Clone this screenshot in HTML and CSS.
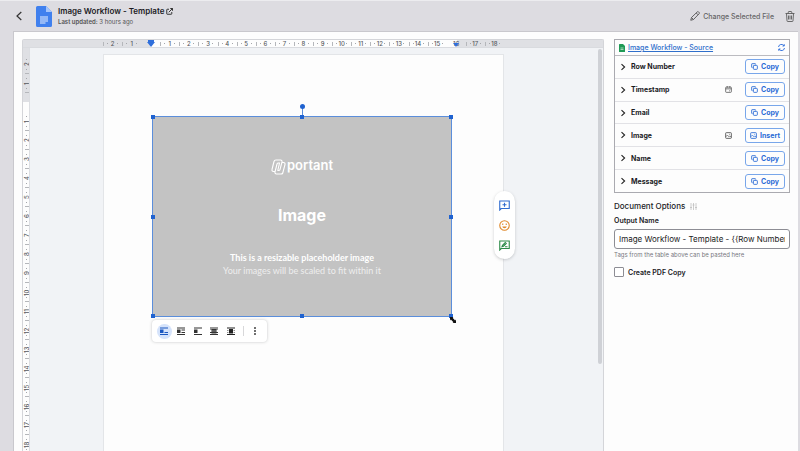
FILE: index.html
```html
<!DOCTYPE html>
<html lang="en">
<head>
    <meta charset="UTF-8">
    <meta name="viewport" content="width=device-width, initial-scale=1.0">
    <title>Image Workflow - Template</title>
    <link rel="stylesheet" href="styles.css">
</head>
<body>
    <!-- shared icons -->
    <svg class="defs" width="0" height="0" aria-hidden="true">
        <symbol id="icon-chevron" viewBox="0 0 8 8">
            <path d="M2.5 1.2 5.6 4 2.5 6.8" fill="none" stroke="#222" stroke-width="1.1"/>
        </symbol>
        <symbol id="icon-copy" viewBox="0 0 16 16">
            <rect x="5.5" y="5.5" width="9" height="9" rx="1.5" fill="none" stroke="currentColor" stroke-width="2"/>
            <path d="M3.5 10.5h-1a1 1 0 0 1-1-1v-7a1 1 0 0 1 1-1h7a1 1 0 0 1 1 1v1" fill="none" stroke="currentColor" stroke-width="2"/>
        </symbol>
        <symbol id="icon-image" viewBox="0 0 16 16">
            <rect x="1.5" y="1.5" width="13" height="13" rx="1.5" fill="none" stroke="currentColor" stroke-width="2"/>
            <path d="M1.5 11 5.5 7l3.5 4 2-2 3.5 3" fill="none" stroke="currentColor" stroke-width="1.6"/>
            <circle cx="10.5" cy="5.3" r="1.1" fill="currentColor"/>
        </symbol>
    </svg>

    <div class="app">
        <header class="topbar">
            <button class="icon-btn back" aria-label="Back">
                <svg width="8" height="10" viewBox="0 0 8 10"><path d="M6.3 1 2 5l4.3 4" fill="none" stroke="#333" stroke-width="1.2"/></svg>
            </button>
            <svg class="doc-icon" width="16" height="21" viewBox="0 0 16 21">
                <path d="M1.5 0H10l6 6v13.500A1.500 1.500 0 0 1 14.500 21h-13A1.500 1.500 0 0 1 0 19.500v-18A1.500 1.500 0 0 1 1.500 0z" fill="#4080ee"/>
                <path d="M10 0l6 6h-6z" fill="#a5c5fb"/>
                <path d="M4 11h8M4 13h8M4 15h8M4 17h5.5" stroke="#e8f0fe" stroke-width="1.1"/>
            </svg>
            <div class="heading">
                <h1>Image Workflow - Template
                    <a href="#" aria-label="Open template"><svg width="7" height="7" viewBox="0 0 14 14" fill="none" stroke="#222" stroke-width="1.8"><path d="M6 2.5H2.5a1 1 0 0 0-1 1v8a1 1 0 0 0 1 1h8a1 1 0 0 0 1-1V8M8.5 1H13v4.500M13 1 5.500 8.500"/></svg></a>
                </h1>
                <p><b>Last updated:</b> 3 hours ago</p>
            </div>
            <button class="icon-btn change">
                <svg width="10" height="10" viewBox="0 0 20 20" fill="none" stroke="#555" stroke-width="1.8"><path d="M1.5 18.5 3 13 14.5 1.8a1.8 1.8 0 0 1 2.6 0l1.1 1.1a1.8 1.8 0 0 1 0 2.6L7 17zM12.500 4l3.600 3.600M3 13l4 4"/></svg>
                Change Selected File
            </button>
            <button class="icon-btn trash" aria-label="Delete">
                <svg width="10" height="11" viewBox="0 0 20 22" fill="none" stroke="#555" stroke-width="1.7"><path d="M1 5h18M3 5l1 14.500a1.500 1.500 0 0 0 1.500 1.500h9a1.500 1.500 0 0 0 1.500-1.500L17 5M6.500 5V2.500A1.500 1.500 0 0 1 8 1h4a1.500 1.500 0 0 1 1.500 1.500V5M7 9v8M10 9v8M13 9v8"/></svg>
            </button>
        </header>

        <main class="workspace">
            <section class="editor">
                <div class="ruler-h">
                    <div class="ticks">
                        <span>2</span><span>1</span><span class="start"><svg class="marker" width="8" height="7" viewBox="0 0 8 7"><path d="M1 0h6v2h1L4 7 0 2h1z" fill="#2f6fdb"/></svg></span><span class="on">1</span><span class="on">2</span><span class="on">3</span><span class="on">4</span><span class="on">5</span><span class="on">6</span><span class="on">7</span><span class="on">8</span><span class="on">9</span><span class="on">10</span><span class="on">11</span><span class="on">12</span><span class="on">13</span><span class="on">14</span><span class="on">15</span><span class="end">16<svg class="marker" width="6" height="5" viewBox="0 0 6 5"><path d="M0 1h6L3 5z" fill="#2f6fdb"/></svg></span><span>17</span><span>18</span>
                    </div>
                </div>
                <div class="canvas">
                    <div class="ruler-v">
                        <span>2</span><span>1</span><span class="start"></span><span class="on">1</span><span class="on">2</span><span class="on">3</span><span class="on">4</span><span class="on">5</span><span class="on">6</span><span class="on">7</span><span class="on">8</span><span class="on">9</span><span class="on">10</span><span class="on">11</span><span class="on">12</span><span class="on">13</span><span class="on">14</span><span class="on">15</span><span class="on">16</span><span class="on">17</span><span class="on">18</span>
                    </div>
                    <div class="page-area">
                        <div class="page">
                            <div class="placeholder">
                                <div class="brand">
                                    <!-- two interlocked slanted links -->
                                    <svg width="15" height="16" viewBox="0 0 30 32" fill="none" stroke="#fff" stroke-width="2.2">
                                        <path d="M8 25H5a3 3 0 0 1-3-4L6 5a4 4 0 0 1 4-3h9a3 3 0 0 1 3 4l-4 15a3 3 0 0 1-3 2h-2"/>
                                        <path d="M22 7h3a3 3 0 0 1 3 4l-4 15a4 4 0 0 1-4 4h-9a3 3 0 0 1-3-4l4-16a3 3 0 0 1 3-2h2l-3.500 15"/>
                                    </svg>
                                    portant
                                </div>
                                <h2>Image</h2>
                                <p class="strong">This is a resizable placeholder image</p>
                                <p>Your images will be scaled to fit within it</p>
                                <i class="stem"></i>
                                <i class="handle rotate"></i>
                                <i class="handle tl"></i><i class="handle tc"></i><i class="handle tr"></i>
                                <i class="handle ml"></i><i class="handle mr"></i>
                                <i class="handle bl"></i><i class="handle bc"></i><i class="handle br"></i>
                                <svg class="cursor" width="6" height="6" viewBox="0 0 7 7"><path d="M0 0h4L3 1l3 3 1-1v4H3l1-1-3-3-1 1z" fill="#111"/></svg>
                            </div>
                            <div class="wrap-bar">
                                <button class="active" aria-label="In line">
                                    <svg width="8" height="8" viewBox="0 0 16 16" fill="#1a57c0"><path d="M0 1h16v2H0zM0 5h7v7H0zM9 10h7v2H9zM0 14h16v2H0z"/></svg>
                                </button>
                                <button aria-label="Wrap text">
                                    <svg width="8" height="8" viewBox="0 0 16 16" fill="#333"><path d="M0 1h16v2H0zM0 5h7v7H0zM9 5h7v2H9zM9 10h7v2H9zM0 14h16v2H0z"/></svg>
                                </button>
                                <button aria-label="Break text">
                                    <svg width="8" height="8" viewBox="0 0 16 16" fill="#333"><path d="M0 1h16v2H0zM0 5h7v7H0zM0 14h16v2H0z"/></svg>
                                </button>
                                <button aria-label="Behind text">
                                    <svg width="8" height="8" viewBox="0 0 16 16" fill="#333"><path d="M0 1h16v2H0zM3 4h10v9H3zM0 5h16v1H0zM0 10h16v2H0zM0 14h16v2H0z"/><path d="M4 7h8v2H4z" fill="#888"/></svg>
                                </button>
                                <button aria-label="In front of text">
                                    <svg width="8" height="8" viewBox="0 0 16 16" fill="#222"><path d="M0 1h16v2H0zM4 4h8v9H4zM0 6h3v1H0zM13 6h3v1h-3zM0 10h3v1H0zM13 10h3v1h-3zM0 14h16v2H0z"/></svg>
                                </button>
                                <span class="divider"></span>
                                <button aria-label="More options">
                                    <svg width="8" height="8" viewBox="0 0 16 16" fill="#333"><circle cx="8" cy="2" r="1.9"/><circle cx="8" cy="8" r="1.9"/><circle cx="8" cy="14" r="1.9"/></svg>
                                </button>
                            </div>
                            <div class="side-pill">
                                <button aria-label="Add comment">
                                    <svg width="11" height="11" viewBox="0 0 22 22" fill="none" stroke="#2f6bd0" stroke-width="2.2"><path d="M1.5 20V2h19v15H4.5zM11 5.500v8M7 9.500h8"/></svg>
                                </button>
                                <button aria-label="Add emoji reaction">
                                    <svg width="11" height="11" viewBox="0 0 22 22" fill="none" stroke="#e0892b" stroke-width="2.2"><circle cx="11" cy="11" r="9.5"/><path d="M6.5 13h9a4.6 4.600 0 0 1-9 0z" fill="#e0892b" stroke="none"/><path d="M7.500 7v3M14.500 7v3"/></svg>
                                </button>
                                <button aria-label="Suggest edits">
                                    <svg width="11" height="11" viewBox="0 0 22 22" fill="none" stroke="#2c8b48" stroke-width="2.2"><path d="M1.500 20V2h19v15H4.500zM6 13.500l1-3 5.500-5.500 2 2L9 12.500zM12 13.500h5"/></svg>
                                </button>
                            </div>
                        </div>
                    </div>
                    <i class="scrollbar"></i>
                </div>
            </section>

            <aside class="panel">
                <div class="source">
                    <div class="source-head">
                        <svg width="6" height="8" viewBox="0 0 12 16"><path d="M1 0h7l4 4v11a1 1 0 0 1-1 1H1a1 1 0 0 1-1-1V1a1 1 0 0 1 1-1z" fill="#1f9a55"/><path d="M3 8h6M3 11h6" fill="none" stroke="#fff" stroke-width="1.2"/></svg>
                        <a href="#">Image Workflow - Source</a>
                        <button class="icon-btn" aria-label="Refresh">
                            <svg width="7" height="7" viewBox="0 0 14 14" fill="none" stroke="#2f6fdb" stroke-width="1.9"><path d="M1 6a6 6 0 0 1 11-2.5M13 8a6 6 0 0 1-11 2.5M12.5.5v3.500H9M1.500 13.500V10H5"/></svg>
                        </button>
                    </div>
                    <ul class="fields">
                        <li><svg class="chevron"><use href="#icon-chevron"/></svg><span>Row Number</span><button><svg><use href="#icon-copy"/></svg>Copy</button></li>
                        <li><svg class="chevron"><use href="#icon-chevron"/></svg><span>Timestamp</span><svg class="type" viewBox="0 0 16 16" fill="none" stroke="#555" stroke-width="1.8"><rect x="1.5" y="2.5" width="13" height="12" rx="1.5"/><path d="M1.500 6.500h13M5 0v4M11 0v4M9.500 11h2"/></svg><button><svg><use href="#icon-copy"/></svg>Copy</button></li>
                        <li><svg class="chevron"><use href="#icon-chevron"/></svg><span>Email</span><button><svg><use href="#icon-copy"/></svg>Copy</button></li>
                        <li><svg class="chevron"><use href="#icon-chevron"/></svg><span>Image</span><svg class="type"><use href="#icon-image"/></svg><button><svg><use href="#icon-image"/></svg>Insert</button></li>
                        <li><svg class="chevron"><use href="#icon-chevron"/></svg><span>Name</span><button><svg><use href="#icon-copy"/></svg>Copy</button></li>
                        <li><svg class="chevron"><use href="#icon-chevron"/></svg><span>Message</span><button><svg><use href="#icon-copy"/></svg>Copy</button></li>
                    </ul>
                </div>

                <h3>Document Options
                    <svg width="7" height="7" viewBox="0 0 14 14" stroke="#bbb" stroke-width="1.5"><path d="M2 0v14M7 0v14M12 0v14M0 9h4M5 4h4M10 9h4"/></svg>
                </h3>
                <label class="field-label" for="outputName">Output Name</label>
                <input type="text" id="outputName" value="Image Workflow - Template - {{Row Number}}">
                <p class="hint">Tags from the table above can be pasted here</p>
                <div class="check">
                    <input type="checkbox" id="pdfCopy">
                    <label for="pdfCopy">Create PDF Copy</label>
                </div>
            </aside>
        </main>
    </div>
</body>
</html>
```
FILE: styles.css
```css
* {
    box-sizing: border-box;
}
body {
    margin: 0;
    font-family: Inter, "Liberation Sans", sans-serif;
    font-size: 8px;
    color: #1b1b1f;
    background-color: #dddce1;
}
h1, h2, h3, p, ul {
    margin: 0;
    padding: 0;
}
button {
    font-family: inherit;
    padding: 0;
    border: none;
    background: none;
    cursor: pointer;
}
svg {
    flex: none;
}
.defs {
    position: absolute;
}
.app {
    display: flex;
    flex-direction: column;
    height: 100vh;
    overflow: hidden;
    border-top: 1px solid #ececef;
}

/* top bar */
.topbar {
    display: flex;
    align-items: center;
    height: 30px;
    flex: none;
    padding: 0 5px 0 15px;
}
.icon-btn {
    display: flex;
    align-items: center;
    color: #666;
    font-size: 7px;
}
.doc-icon {
    margin: 0 6px 0 13px;
}
.heading {
    flex: 1;
}
.heading h1 {
    display: flex;
    align-items: center;
    gap: 2px;
    font-size: 8px;
    line-height: 11px;
    font-weight: 600;
}
.heading a {
    display: flex;
}
.heading p {
    font-size: 6px;
    line-height: 9px;
    color: #555;
}
.heading b {
    font-weight: 600;
}
.change {
    gap: 3px;
    margin-right: 11px;
    font-weight: 500;
}

/* workspace */
.workspace {
    display: flex;
    flex: 1;
    min-height: 0;
    margin: 0 2px 0 13px;
    background-color: #fdfdfd;
    border: 1px solid #c9c8cd;
    border-width: 1px 0 0 1px;
}
.editor {
    display: flex;
    flex-direction: column;
    flex: 1;
    min-width: 0;
    margin: 7px 0 0 8px;
    border: 1px solid #d4d5d9;
    border-bottom: none;
    border-radius: 2px 2px 0 0;
    background-color: #f1f3f6;
}
.ruler-h {
    display: flex;
    justify-content: center;
    flex: none;
    height: 8px;
    padding: 0 26px 0 7px;
    background-color: #dfe0e4;
    border-bottom: 1px solid #d9dbdf;
}
.ticks {
    display: flex;
    width: 401px;
}
.ticks span,
.ruler-v span {
    position: relative;
    display: flex;
    align-items: center;
    justify-content: center;
    font-size: 6px;
    line-height: 7px;
    font-weight: 500;
    color: #55585c;
}
.ticks span {
    flex: 1;
    background-image: linear-gradient(#b5b7bb, #b5b7bb), linear-gradient(#a5a7ab, #a5a7ab), linear-gradient(#a5a7ab, #a5a7ab);
    background-size: 1px 4px, 1px 1px, 1px 1px;
    background-position: 0 2px, 4px 3px, 14px 3px;
    background-repeat: no-repeat;
}
.on {
    background-color: #fdfdfd;
}
.ticks .start {
    background-image: linear-gradient(90deg, #dfe0e4 50%, #fdfdfd 50%);
    background-size: auto;
    background-position: 0 0;
}
.ticks .end {
    background-image: linear-gradient(90deg, #fdfdfd 50%, #dfe0e4 50%);
    background-size: auto;
    background-position: 0 0;
}
.end .marker {
    position: absolute;
    top: 2px;
    left: 6px;
}
.canvas {
    position: relative;
    display: flex;
    flex: 1;
    min-height: 0;
}
.ruler-v {
    flex: none;
    width: 7px;
    padding-top: 7px;
    background-color: #dfe0e4;
    border-right: 1px solid #dcdee2;
    overflow: hidden;
}
.ruler-v span {
    height: 19px;
    writing-mode: vertical-rl;
    transform: rotate(180deg);
    background-image: linear-gradient(#b5b7bb, #b5b7bb), linear-gradient(#a5a7ab, #a5a7ab), linear-gradient(#a5a7ab, #a5a7ab);
    background-size: 4px 1px, 1px 1px, 1px 1px;
    background-position: 1px 0, 3px 4px, 3px 14px;
    background-repeat: no-repeat;
}
.ruler-v .start {
    width: 6px;
    background-image: linear-gradient(#fdfdfd 50%, #dfe0e4 50%);
    background-size: auto;
    background-position: 0 0;
}
.page-area {
    display: flex;
    justify-content: center;
    flex: 1;
    padding: 6px 26px 0 0;
}
.page {
    position: relative;
    width: 401px;
    padding: 61px 51px 0 48px;
    background-color: #fdfdfd;
    border: 1px solid #e3e5e8;
    border-bottom: none;
}
.scrollbar {
    position: absolute;
    top: 1px;
    right: 1px;
    width: 4px;
    height: 315px;
    border-radius: 2px;
    background-color: #cfd1d6;
}

/* selected image */
.placeholder {
    position: relative;
    display: flex;
    flex-direction: column;
    align-items: center;
    height: 201px;
    padding-top: 38px;
    background-color: #c3c3c3;
    border: 1px solid #5b8edb;
    color: #fff;
}
.brand {
    display: flex;
    align-items: center;
    gap: 1px;
    height: 20px;
    font-size: 13px;
    line-height: 16px;
    font-weight: 600;
}
.brand svg {
    margin-top: 4px;
}
.placeholder h2 {
    margin: 30px 0 26px;
    font-size: 16px;
    line-height: 20px;
    font-weight: 700;
}
.placeholder p {
    font-family: Lato, "Liberation Sans", sans-serif;
    font-size: 9px;
    line-height: 13px;
    color: #eee;
}
.placeholder .strong {
    font-weight: 700;
    color: #fff;
}
.handle {
    position: absolute;
    width: 4px;
    height: 4px;
    margin: -2px;
    background-color: #1f62d0;
}
.tl, .ml, .bl {
    left: 0;
}
.tc, .bc, .rotate, .stem {
    left: 50%;
}
.tr, .mr, .br {
    left: 100%;
}
.tl, .tc, .tr {
    top: 0;
}
.ml, .mr {
    top: 50%;
}
.bl, .bc, .br {
    top: 100%;
}
.rotate {
    top: -11px;
    width: 5px;
    height: 5px;
    border-radius: 50%;
}
.stem {
    position: absolute;
    top: -10px;
    width: 1px;
    height: 10px;
    background-color: #5b8edb;
}
.cursor {
    position: absolute;
    right: -5px;
    bottom: -7px;
}
.wrap-bar {
    display: flex;
    align-items: center;
    width: 115px;
    height: 22px;
    margin-top: 3px;
    padding: 0 5px;
    gap: 2px;
    border-radius: 4px;
    background-color: #fff;
    box-shadow: 0 0 3px rgba(60, 64, 67, 0.3);
}
.wrap-bar button {
    display: flex;
    align-items: center;
    justify-content: center;
    width: 15px;
    height: 15px;
    border-radius: 50%;
}
.wrap-bar .active {
    background-color: #d5e3fb;
}
.divider {
    width: 1px;
    height: 10px;
    margin: 0 1px 0 3px;
    background-color: #d8d8da;
}
.side-pill {
    position: absolute;
    top: 136px;
    right: -12px;
    display: flex;
    flex-direction: column;
    align-items: center;
    justify-content: center;
    gap: 9px;
    width: 21px;
    height: 68px;
    border-radius: 11px;
    background-color: #fff;
    box-shadow: 0 1px 3px rgba(60, 64, 67, 0.25);
}
.side-pill button {
    display: flex;
}

/* right panel */
.panel {
    flex: none;
    width: 194px;
    padding: 7px 8px 0 10px;
}
.source {
    border: 1px solid #aaaab0;
}
.source-head {
    display: flex;
    align-items: center;
    gap: 3px;
    height: 16px;
    padding: 0 4px;
    border-bottom: 1px solid #bbbbc0;
}
.source-head a {
    flex: 1;
    font-size: 7px;
    font-weight: 500;
    color: #2f6fcb;
    text-decoration: underline;
}
.fields {
    display: flex;
    flex-direction: column;
    height: 136px;
    list-style: none;
}
.fields li {
    display: flex;
    flex: 1;
    align-items: center;
    padding: 0 4px;
    border-top: 1px solid #e2e2e6;
}
.fields li:first-child {
    border-top: none;
}
.fields span {
    flex: 1;
    margin-left: 4px;
    font-size: 7px;
    font-weight: 700;
}
.chevron {
    width: 8px;
    height: 8px;
}
.type {
    width: 7px;
    height: 7px;
    margin-right: 13px;
    color: #555;
}
.fields button {
    display: flex;
    align-items: center;
    justify-content: center;
    gap: 3px;
    width: 40px;
    height: 15px;
    border: 1px solid #78a6ea;
    border-radius: 3px;
    font-size: 7px;
    font-weight: 700;
    color: #2a6bd6;
}
.fields button svg {
    width: 7px;
    height: 7px;
}
.panel h3 {
    display: flex;
    align-items: center;
    gap: 5px;
    margin: 8px 0 5px;
    font-size: 8px;
    line-height: 10px;
    font-weight: 500;
}
.field-label {
    display: block;
    margin-bottom: 3px;
    font-size: 7px;
    line-height: 10px;
    font-weight: 600;
}
.panel input[type="text"] {
    display: block;
    width: 100%;
    height: 20px;
    padding: 0 4px;
    border: 1px solid #8d8d94;
    border-radius: 3px;
    font-family: inherit;
    font-size: 8px;
    color: #222;
    background-color: #fff;
}
.hint {
    margin: 2px 0 8px;
    font-size: 6px;
    line-height: 8px;
    color: #77777d;
}
.check {
    display: flex;
    align-items: center;
    gap: 4px;
    font-size: 7px;
    font-weight: 600;
}
.check input {
    appearance: none;
    width: 10px;
    height: 10px;
    margin: 0;
    border: 1px solid #8d8d94;
    border-radius: 1px;
    background-color: #fff;
}
```
